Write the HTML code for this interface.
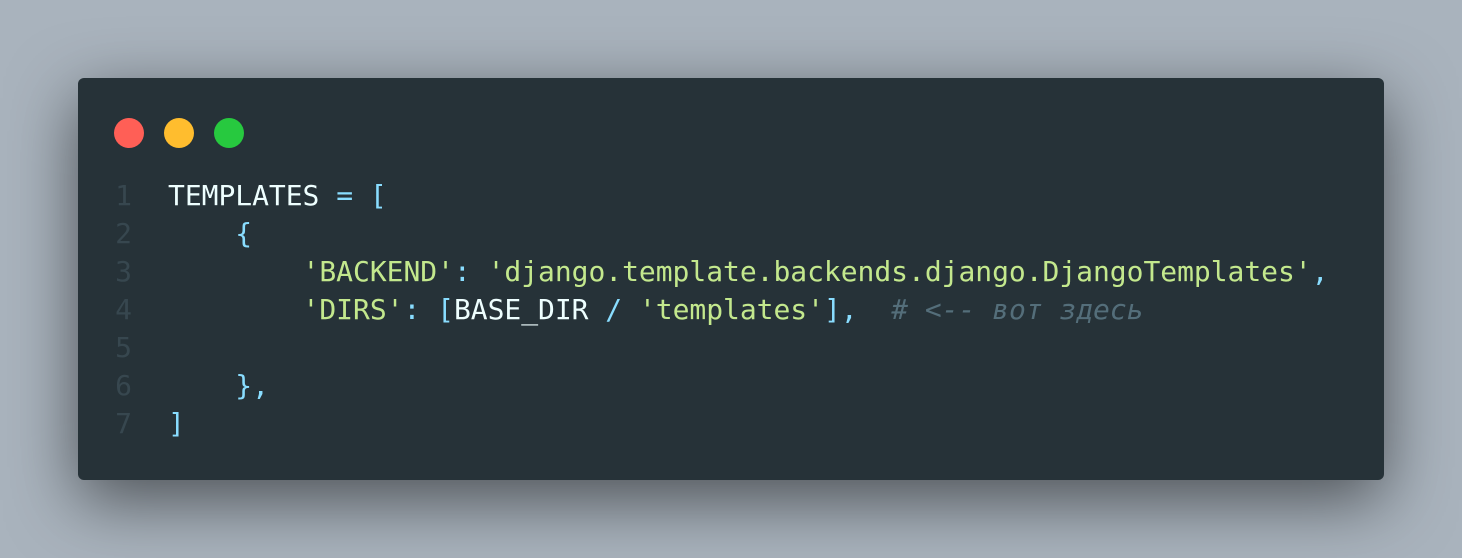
<!DOCTYPE html>
<html><head><meta charset="utf-8"><style>
html,body{margin:0;padding:0;}
body{width:1462px;height:558px;overflow:hidden;background:#a9b3bd;position:relative;}
.win{position:absolute;left:78px;top:78px;width:1306px;height:402px;background:#263238;border-radius:6px;box-shadow:0 20px 68px rgba(0,0,0,0.55);}
.dot{position:absolute;top:40px;width:30px;height:30px;border-radius:50%;}
.code{position:absolute;left:0;top:99px;font-family:"DejaVu Sans Mono","Liberation Mono",monospace;font-size:28px;letter-spacing:-0.04px;line-height:38px;white-space:pre;color:#eeffff;}
.ln{position:absolute;left:24px;width:30px;text-align:right;color:#37474f;}
.tx{position:absolute;left:90px;}
.p{color:#89ddff}.s{color:#c3e88d}.c{color:#546e7a;font-style:italic}
</style></head><body>
<div class="win">
<div class="dot" style="left:36px;background:#ff5f56"></div>
<div class="dot" style="left:86px;background:#ffbd2e"></div>
<div class="dot" style="left:136px;background:#27c93f"></div>
<div class="code">
<div class="ln" style="top:0">1</div><div class="tx" style="top:0">TEMPLATES <span class="p">=</span> <span class="p">[</span></div>
<div class="ln" style="top:38px">2</div><div class="tx" style="top:38px">    <span class="p">{</span></div>
<div class="ln" style="top:76px">3</div><div class="tx" style="top:76px">        <span class="s">'BACKEND'</span><span class="p">:</span> <span class="s">'django.template.backends.django.DjangoTemplates'</span><span class="p">,</span></div>
<div class="ln" style="top:114px">4</div><div class="tx" style="top:114px">        <span class="s">'DIRS'</span><span class="p">:</span> <span class="p">[</span>BASE_DIR <span class="p">/</span> <span class="s">'templates'</span><span class="p">],</span>  <span class="c"># &lt;-- вот здесь</span></div>
<div class="ln" style="top:152px">5</div>
<div class="ln" style="top:190px">6</div><div class="tx" style="top:190px">    <span class="p">},</span></div>
<div class="ln" style="top:228px">7</div><div class="tx" style="top:228px"><span class="p">]</span></div>
</div>
</div>
</body></html>
